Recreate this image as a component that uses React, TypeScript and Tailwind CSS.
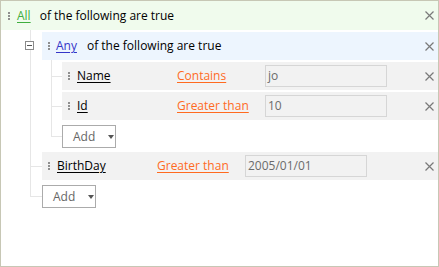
import React from "react";

const Handle = () => (
  <svg width="2" height="8" viewBox="0 0 2 8" className="shrink-0">
    <rect x="0" y="0" width="2" height="2" fill="#8f8f8f" />
    <rect x="0" y="3" width="2" height="2" fill="#8f8f8f" />
    <rect x="0" y="6" width="2" height="2" fill="#8f8f8f" />
  </svg>
);

const Close = () => (
  <svg width="9" height="9" viewBox="0 0 9 9" className="shrink-0">
    <path d="M0.5 0.5 L8.5 8.5 M8.5 0.5 L0.5 8.5" stroke="#7a7a7a" strokeWidth="1.2" />
  </svg>
);

const Caret = () => (
  <svg width="6" height="4" viewBox="0 0 6 4">
    <path d="M0 0 L6 0 L3 4 Z" fill="#555" />
  </svg>
);

const AddButton = () => (
  <div className="flex h-[23px] w-[54px] items-center border border-[#ababab] bg-white pl-[10px] text-[#666]">
    <span>Add</span>
    <span className="ml-[13px] mt-[1px] flex">
      <Caret />
    </span>
  </div>
);

const Rule = ({ field, op, value }: { field: string; op: string; value: string }) => (
  <div className="flex h-[28px] items-center bg-[#f2f2f2] pl-[6px] pr-[4px]">
    <Handle />
    <span className="ml-[7px] w-[100px] text-black underline underline-offset-2">{field}</span>
    <span className="w-[88px] text-[#ff6a1f] underline underline-offset-2">{op}</span>
    <div className="flex h-[22px] w-[122px] items-center border border-[#d6d6d6] bg-[#f2f2f2] pl-[2px] text-[#6b6b6b]">
      {value}
    </div>
    <span className="ml-auto flex">
      <Close />
    </span>
  </div>
);

export default function App() {
  return (
    <div
      className="h-[267px] w-[439px] overflow-hidden border border-[#c7c7b5] bg-white text-[12px] leading-none"
      style={{ fontFamily: "'Open Sans', 'Noto Sans', sans-serif" }}
    >
      {/* root row */}
      <div className="flex h-[29px] items-center bg-[#f0fbed] pl-[7px] pr-[4px]">
        <Handle />
        <span className="ml-[7px] text-[#3fae3f] underline underline-offset-2">All</span>
        <span className="ml-[9px] text-black">of the following are true</span>
        <span className="ml-auto flex">
          <Close />
        </span>
      </div>

      {/* root children */}
      <div className="ml-[41px] mt-[2px] flex flex-col">
        {/* Any group */}
        <div className="relative">
          <span className="absolute left-[-12px] top-[-2px] bottom-[-5px] w-px bg-[#e6e6e6]" />
          <div className="relative flex h-[28px] items-center bg-[#edf5fe] pl-[6px] pr-[4px]">
            <span className="absolute left-[-17px] top-[9px] flex h-[9px] w-[9px] items-center justify-center border border-[#8a8a8a] bg-white">
              <span className="h-px w-[5px] bg-[#555]" />
            </span>
            <Handle />
            <span className="ml-[6px] text-[#3535c8] underline underline-offset-2">Any</span>
            <span className="ml-[10px] text-black">of the following are true</span>
            <span className="ml-auto flex">
              <Close />
            </span>
          </div>
          <div className="ml-[20px] mt-[2px] flex flex-col">
            <div className="relative">
              <span className="absolute left-[-11px] top-[-2px] bottom-[-2px] w-px bg-[#e6e6e6]" />
              <span className="absolute left-[-10px] top-[14px] h-px w-[10px] bg-[#e6e6e6]" />
              <Rule field="Name" op="Contains" value="jo" />
            </div>
            <div className="relative mt-[2px]">
              <span className="absolute left-[-11px] top-0 bottom-[-5px] w-px bg-[#e6e6e6]" />
              <span className="absolute left-[-10px] top-[14px] h-px w-[10px] bg-[#e6e6e6]" />
              <Rule field="Id" op="Greater than" value="10" />
            </div>
            <div className="relative mt-[5px]">
              <span className="absolute left-[-11px] top-0 h-[12px] w-px bg-[#e6e6e6]" />
              <span className="absolute left-[-10px] top-[11px] h-px w-[10px] bg-[#e6e6e6]" />
              <AddButton />
            </div>
          </div>
        </div>

        {/* BirthDay rule */}
        <div className="relative mt-[4px]">
          <span className="absolute left-[-12px] top-[-4px] bottom-[-5px] w-px bg-[#e6e6e6]" />
          <span className="absolute left-[-11px] top-[14px] h-px w-[11px] bg-[#e6e6e6]" />
          <Rule field="BirthDay" op="Greater than" value="2005/01/01" />
        </div>

        <div className="relative mt-[5px]">
          <span className="absolute left-[-12px] top-0 h-[12px] w-px bg-[#e6e6e6]" />
          <span className="absolute left-[-11px] top-[11px] h-px w-[11px] bg-[#e6e6e6]" />
          <AddButton />
        </div>
      </div>
    </div>
  );
}
